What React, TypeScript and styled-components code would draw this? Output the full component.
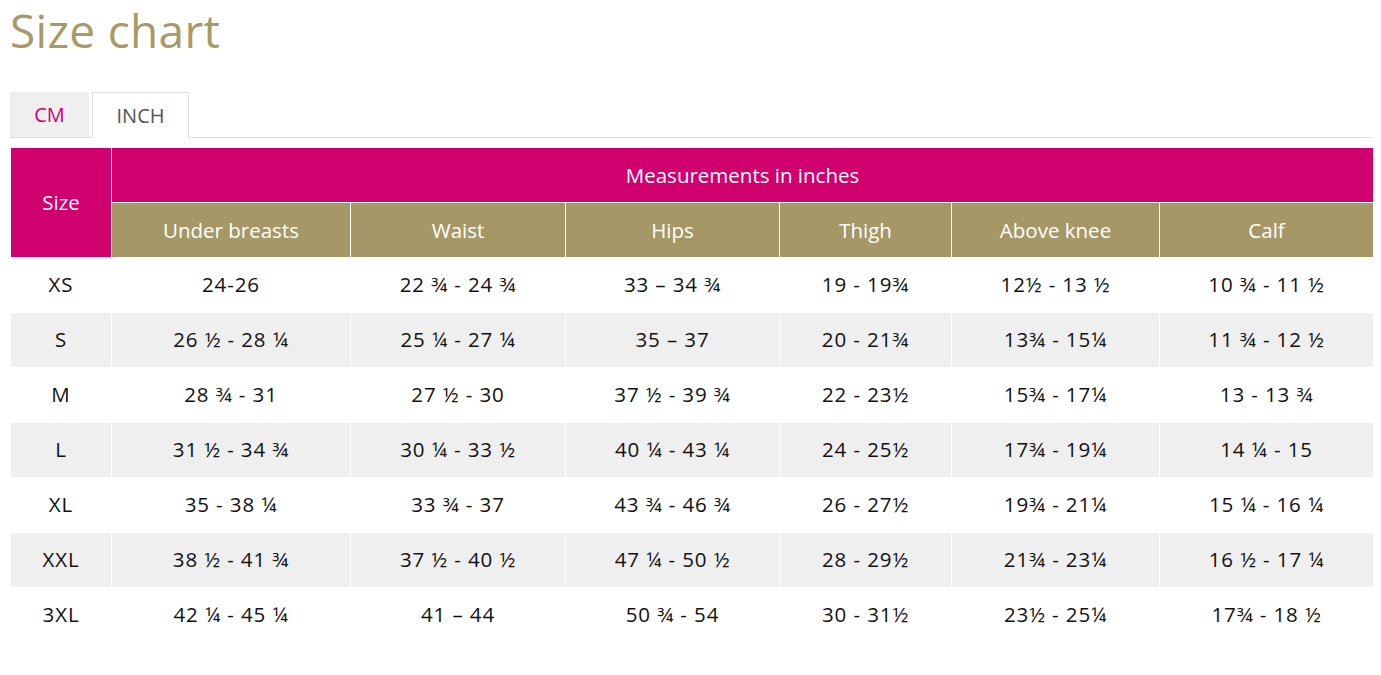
import React from "react";
import styled, { createGlobalStyle } from "styled-components";

const Global = createGlobalStyle`
  html, body { margin: 0; padding: 0; background: #fff; }
  body { font-family: "Open Sans", "Noto Sans", sans-serif; color: #111; }
`;

const Page = styled.div`
  padding: 0 9px 0 10px;
`;

const Title = styled.h1`
  margin: 0;
  padding-top: 2px;
  height: 90px;
  font-weight: 400;
  font-size: 46px;
  line-height: 56px;
  color: #a89a67;
  letter-spacing: 0.3px;
`;

const TabBar = styled.div`
  display: flex;
  align-items: flex-end;
  gap: 3px;
  border-bottom: 1px solid #ddd;
  height: 45px;
  margin-bottom: 9px;
`;

const Tab = styled.div<{ $active?: boolean }>`
  box-sizing: border-box;
  height: ${(p) => (p.$active ? "46px" : "45px")};
  margin-bottom: ${(p) => (p.$active ? "-1px" : "0")};
  width: ${(p) => (p.$active ? "97px" : "79px")};
  justify-content: center;
  display: flex;
  align-items: center;
  font-size: 20px;
  color: ${(p) => (p.$active ? "#555" : "#d0006f")};
  background: ${(p) => (p.$active ? "#fff" : "#efefef")};
  border: ${(p) => (p.$active ? "1px solid #ddd" : "none")};
  border-bottom: ${(p) => (p.$active ? "1px solid #fff" : "none")};
`;

const Table = styled.table`
  border-collapse: collapse;
  width: 1363px;
  table-layout: fixed;
  font-size: 20.5px;
`;

const Th = styled.th<{ $tone: "pink" | "gold" }>`
  background: ${(p) => (p.$tone === "pink" ? "#d0006f" : "#a69866")};
  color: #fff;
  font-weight: 400;
  height: 55px;
  padding: 0 0 1px;
  box-sizing: border-box;
  border: 1px solid #fff;
  text-align: center;
`;

const Row = styled.tr<{ $alt: boolean }>`
  background: ${(p) => (p.$alt ? "#efefef" : "#fff")};
`;

const Td = styled.td`
  height: 55px;
  padding: 0 0 2px;
  box-sizing: border-box;
  border: 1px solid #fff;
  text-align: center;
  color: #111;
  letter-spacing: 0.9px;
`;

const cols = [
  { name: "Under breasts", w: 239 },
  { name: "Waist", w: 215 },
  { name: "Hips", w: 214 },
  { name: "Thigh", w: 172 },
  { name: "Above knee", w: 208 },
  { name: "Calf", w: 214 },
];

const rows: string[][] = [
  ["XS", "24-26", "22 ¾ - 24 ¾", "33 – 34 ¾", "19 - 19¾", "12½ - 13 ½", "10 ¾ - 11 ½"],
  ["S", "26 ½ - 28 ¼", "25 ¼ - 27 ¼", "35 – 37", "20 - 21¾", "13¾ - 15¼", "11 ¾ - 12 ½"],
  ["M", "28 ¾ - 31", "27 ½ - 30", "37 ½ - 39 ¾", "22 - 23½", "15¾ - 17¼", "13 - 13 ¾"],
  ["L", "31 ½ - 34 ¾", "30 ¼ - 33 ½", "40 ¼ - 43 ¼", "24 - 25½", "17¾ - 19¼", "14 ¼ - 15"],
  ["XL", "35 - 38 ¼", "33 ¾ - 37", "43 ¾ - 46 ¾", "26 - 27½", "19¾ - 21¼", "15 ¼ - 16 ¼"],
  ["XXL", "38 ½ - 41 ¾", "37 ½ - 40 ½", "47 ¼ - 50 ½", "28 - 29½", "21¾ - 23¼", "16 ½ - 17 ¼"],
  ["3XL", "42 ¼ - 45 ¼", "41 – 44", "50 ¾ - 54", "30 - 31½", "23½ - 25¼", "17¾ - 18 ½"],
];

export default function App() {
  return (
    <Page>
      <Global />
      <Title>Size chart</Title>
      <TabBar>
        <Tab>CM</Tab>
        <Tab $active>INCH</Tab>
      </TabBar>
      <Table>
        <colgroup>
          <col style={{ width: 101 }} />
          {cols.map((c) => (
            <col key={c.name} style={{ width: c.w }} />
          ))}
        </colgroup>
        <thead>
          <tr>
            <Th $tone="pink" rowSpan={2}>
              Size
            </Th>
            <Th $tone="pink" colSpan={6}>
              Measurements in inches
            </Th>
          </tr>
          <tr>
            {cols.map((c) => (
              <Th key={c.name} $tone="gold">
                {c.name}
              </Th>
            ))}
          </tr>
        </thead>
        <tbody>
          {rows.map((r, i) => (
            <Row key={r[0]} $alt={i % 2 === 1}>
              {r.map((v, j) => (
                <Td key={j}>{v}</Td>
              ))}
            </Row>
          ))}
        </tbody>
      </Table>
    </Page>
  );
}
